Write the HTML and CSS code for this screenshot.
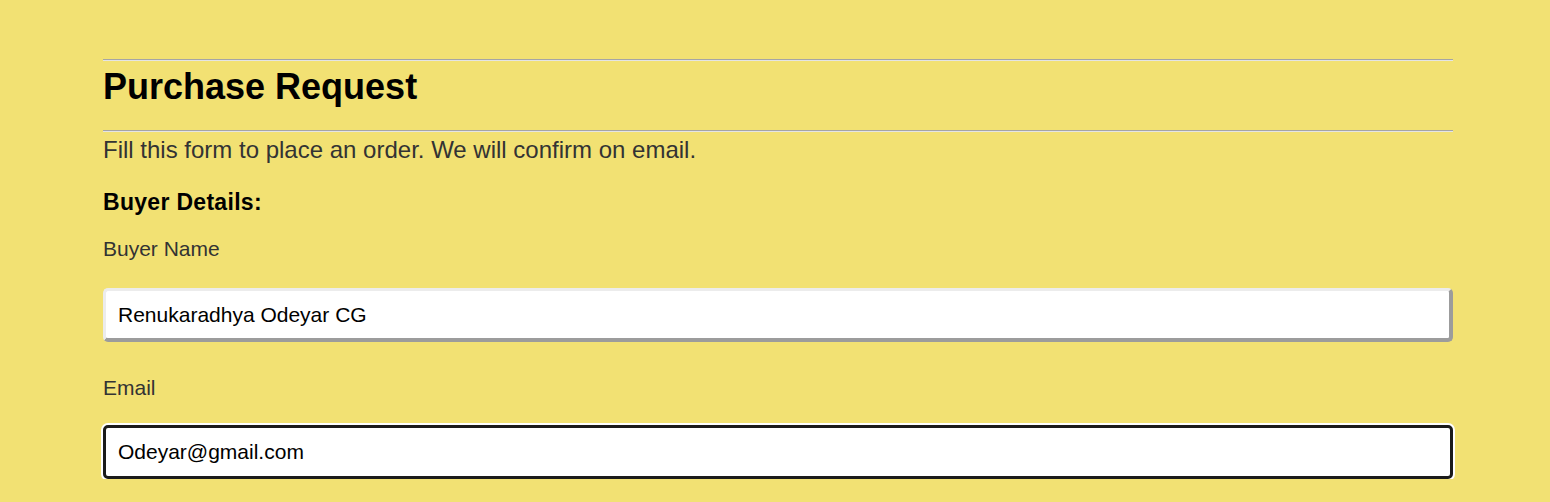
FILE: index.html
```html
<!DOCTYPE html>
<html lang="en">
<head>
<meta charset="utf-8">
<title>Purchase Request</title>
<link rel="stylesheet" href="styles.css">
</head>
<body>
<main class="page">
  <hr class="rule">
  <h1 class="title">Purchase Request</h1>
  <hr class="rule rule-second">
  <p class="intro">Fill this form to place an order. We will confirm on email.</p>
  <h3 class="section">Buyer Details:</h3>
  <div class="field">
    <label class="label" for="name">Buyer Name</label>
    <input class="input" id="name" type="text" value="Renukaradhya Odeyar CG">
  </div>
  <div class="field">
    <label class="label" for="email">Email</label>
    <input class="input input-focus" id="email" type="email" value="Odeyar@gmail.com">
  </div>
</main>
</body>
</html>
```

FILE: styles.css
```css
html, body {
  margin: 0;
  padding: 0;
}
body {
  background: #f2e173;
  font-family: "Liberation Sans", Arial, sans-serif;
  color: #333;
  overflow: hidden;
}
.page {
  width: 1350px;
  margin-left: 103px;
  padding-top: 59px;
  display: flex;
  flex-direction: column;
}
.rule {
  margin: 0;
  height: 0;
  border: 0;
  border-top: 1px solid #a5a5a5;
  border-bottom: 1px solid #e4e4e4;
}
.title {
  margin: 6px 0 0;
  font-size: 36px;
  line-height: 40px;
  font-weight: 700;
  color: #000;
}
.rule-second {
  margin-top: 23px;
}
.intro {
  margin: 4px 0 0;
  font-size: 24px;
  line-height: 28px;
  color: #333;
}
.section {
  margin: 25px 0 0;
  font-size: 23px;
  line-height: 26px;
  letter-spacing: 0.3px;
  font-weight: 700;
  color: #000;
}
.field {
  display: flex;
  flex-direction: column;
}
.label {
  margin-top: 22px;
  font-size: 21px;
  line-height: 24px;
  color: #333;
}
.field + .field .label {
  margin-top: 34px;
}
.input {
  margin-top: 27px;
  box-sizing: border-box;
  width: 100%;
  height: 54px;
  padding: 0 12px;
  font-family: "Liberation Sans", Arial, sans-serif;
  font-size: 21px;
  color: #000;
  background: #fff;
  border-style: solid;
  border-width: 3px 4px 4px 3px;
  border-color: #ececec #9c9c9c #9c9c9c #ececec;
  border-radius: 5px;
  outline: none;
}
.input-focus {
  margin-top: 25px;
  border: 3px solid #1b1b1b;
  box-shadow: 0 0 0 2px #fff;
}
```
